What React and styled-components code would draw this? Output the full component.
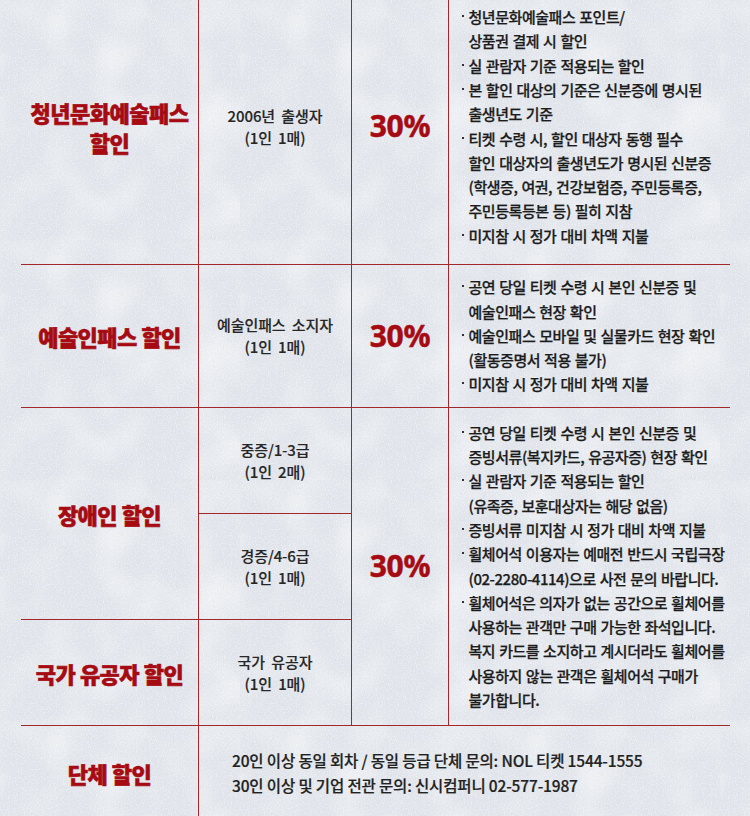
import React from "react";
import styled, { createGlobalStyle } from "styled-components";

const LINE = "#a3282c";
const RED = "#a60a12";

const snow = `<svg xmlns='http://www.w3.org/2000/svg' width='240' height='240'>
<filter id='a'><feTurbulence type='fractalNoise' baseFrequency='0.85' numOctaves='2' seed='4' stitchTiles='stitch'/><feColorMatrix values='0 0 0 0 1 0 0 0 0 1 0 0 0 0 1 0 0 0 2.4 -1.2'/></filter>
<filter id='b'><feTurbulence type='fractalNoise' baseFrequency='0.6' numOctaves='2' seed='9' stitchTiles='stitch'/><feColorMatrix values='0 0 0 0 0.55 0 0 0 0 0.6 0 0 0 0 0.68 2.2 0 0 0 -1.15'/></filter>
<filter id='c'><feTurbulence type='fractalNoise' baseFrequency='0.02' numOctaves='2' seed='2' stitchTiles='stitch'/><feColorMatrix values='0 0 0 0 1 0 0 0 0 1 0 0 0 0 1 0 0 0 2 -0.85'/></filter>
<rect width='240' height='240' filter='url(#c)' opacity='0.5'/>
<rect width='240' height='240' filter='url(#b)' opacity='0.3'/>
<rect width='240' height='240' filter='url(#a)' opacity='0.6'/>
</svg>`;

const GlobalStyle = createGlobalStyle`
  html, body {
    margin: 0;
    padding: 0;
  }
  body {
    width: 750px;
    height: 816px;
    overflow: hidden;
    background-color: #e1e5eb;
    background-image: url("data:image/svg+xml,${encodeURIComponent(snow)}");
    font-family: "Noto Sans CJK KR", "Noto Sans", sans-serif;
    color: #1f1f1f;
  }
`;

const Table = styled.div`
  display: grid;
  margin: -11px 0 0 21px;
  width: 709px;
  grid-template-columns: 178px 153px 97px 281px;
  grid-template-rows: 276px 143px 106px 106px 106px 94px;
  grid-template-areas:
    "t1 w1 p1 n1"
    "t2 w2 p2 n2"
    "t3 w3 p3 n3"
    "t3 w4 p3 n3"
    "t5 w5 p3 n3"
    "t6 g g g";
`;

const Cell = styled.div`
  grid-area: ${(p) => p.$area};
  box-sizing: border-box;
  border-right: ${(p) => (p.$noRight ? "none" : `1px solid ${LINE}`)};
  border-bottom: ${(p) => (p.$noBottom ? "none" : `1px solid ${LINE}`)};
  display: flex;
  align-items: center;
  min-width: 0;
`;

const Title = styled(Cell)`
  justify-content: center;
  text-align: center;
  color: ${RED};
  font-size: 22px;
  font-weight: 900;
  line-height: 30px;
  letter-spacing: -0.5px;
  white-space: nowrap;
  -webkit-text-stroke: 0.6px ${RED};
`;

const Who = styled(Cell)`
  justify-content: center;
  text-align: center;
  font-size: 15px;
  font-weight: 500;
  line-height: 22px;
  letter-spacing: -0.1px;
  word-spacing: 3px;
  color: #262626;
  -webkit-text-stroke: 0.15px #262626;
`;

const Percent = styled(Cell)`
  justify-content: center;
  padding-bottom: 2px;
  color: ${RED};
  font-family: "Noto Sans", "Liberation Sans", sans-serif;
  font-size: 30px;
  font-weight: 700;
  letter-spacing: -0.3px;
  -webkit-text-stroke: 0.5px ${RED};
`;

const Notes = styled(Cell)`
  padding-left: 13px;
`;

const List = styled.ul`
  margin: 0;
  padding: 0;
  list-style: none;
  font-size: 15px;
  font-weight: 500;
  line-height: 24.3px;
  letter-spacing: -0.45px;
  word-spacing: 1px;
  white-space: nowrap;
  color: #1c1c1c;
  -webkit-text-stroke: 0.25px #1c1c1c;
`;

const Item = styled.li`
  display: flex;
`;

const Bullet = styled.span`
  flex: none;
  width: 6.5px;
  &::before {
    content: "";
    display: block;
    width: 2px;
    height: 2px;
    margin-top: 10px;
    background: #333;
  }
`;

const Group = styled(Cell)`
  padding-left: 33px;
  font-size: 15.5px;
  font-weight: 500;
  line-height: 25px;
  letter-spacing: -0.15px;
  white-space: nowrap;
  color: #222;
  -webkit-text-stroke: 0.2px #222;
`;

const Note = ({ lines }) => (
  <Item>
    <Bullet />
    <span>
      {lines.map((l, i) => (
        <React.Fragment key={i}>
          {i > 0 && <br />}
          {l}
        </React.Fragment>
      ))}
    </span>
  </Item>
);

const youthNotes = [
  ["청년문화예술패스 포인트/", "상품권 결제 시 할인"],
  ["실 관람자 기준 적용되는 할인"],
  ["본 할인 대상의 기준은 신분증에 명시된", "출생년도 기준"],
  [
    "티켓 수령 시, 할인 대상자 동행 필수",
    "할인 대상자의 출생년도가 명시된 신분증",
    "(학생증, 여권, 건강보험증, 주민등록증,",
    "주민등록등본 등) 필히 지참",
  ],
  ["미지참 시 정가 대비 차액 지불"],
];

const artistNotes = [
  ["공연 당일 티켓 수령 시 본인 신분증 및", "예술인패스 현장 확인"],
  ["예술인패스 모바일 및 실물카드 현장 확인", "(활동증명서 적용 불가)"],
  ["미지참 시 정가 대비 차액 지불"],
];

const welfareNotes = [
  ["공연 당일 티켓 수령 시 본인 신분증 및", "증빙서류(복지카드, 유공자증) 현장 확인"],
  ["실 관람자 기준 적용되는 할인", "(유족증, 보훈대상자는 해당 없음)"],
  ["증빙서류 미지참 시 정가 대비 차액 지불"],
  ["휠체어석 이용자는 예매전 반드시 국립극장", "(02-2280-4114)으로 사전 문의 바랍니다."],
  [
    "휠체어석은 의자가 없는 공간으로 휠체어를",
    "사용하는 관객만 구매 가능한 좌석입니다.",
    "복지 카드를 소지하고 계시더라도 휠체어를",
    "사용하지 않는 관객은 휠체어석 구매가",
    "불가합니다.",
  ],
];

const NoteList = ({ notes }) => (
  <List>
    {notes.map((lines, i) => (
      <Note key={i} lines={lines} />
    ))}
  </List>
);

export default function App() {
  return (
    <>
      <GlobalStyle />
      <Table>
        <Title $area="t1">
          청년문화예술패스
          <br />
          할인
        </Title>
        <Who $area="w1">
          2006년 출생자
          <br />
          (1인 1매)
        </Who>
        <Percent $area="p1">30%</Percent>
        <Notes $area="n1" $noRight>
          <NoteList notes={youthNotes} />
        </Notes>

        <Title $area="t2">예술인패스 할인</Title>
        <Who $area="w2">
          예술인패스 소지자
          <br />
          (1인 1매)
        </Who>
        <Percent $area="p2">30%</Percent>
        <Notes $area="n2" $noRight>
          <NoteList notes={artistNotes} />
        </Notes>

        <Title $area="t3">장애인 할인</Title>
        <Who $area="w3">
          중증/1-3급
          <br />
          (1인 2매)
        </Who>
        <Who $area="w4">
          경증/4-6급
          <br />
          (1인 1매)
        </Who>
        <Title $area="t5">국가 유공자 할인</Title>
        <Who $area="w5">
          국가 유공자
          <br />
          (1인 1매)
        </Who>
        <Percent $area="p3">30%</Percent>
        <Notes $area="n3" $noRight>
          <NoteList notes={welfareNotes} />
        </Notes>

        <Title $area="t6" $noBottom>
          단체 할인
        </Title>
        <Group $area="g" $noRight $noBottom>
          <div>
            20인 이상 동일 회차 / 동일 등급 단체 문의: NOL 티켓 1544-1555
            <br />
            30인 이상 및 기업 전관 문의: 신시컴퍼니 02-577-1987
          </div>
        </Group>
      </Table>
    </>
  );
}
